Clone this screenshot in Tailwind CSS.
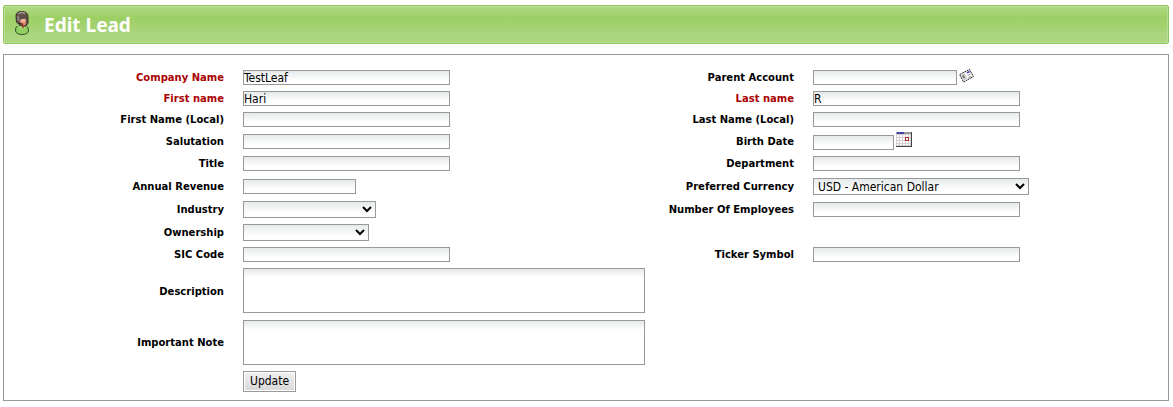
<!DOCTYPE html>
<html lang="en">
<head>
<meta charset="utf-8">
<title>Edit Lead</title>
<script src="https://cdn.jsdelivr.net/npm/@tailwindcss/browser@4"></script>
</head>
<body class="bg-white px-[3px] pt-[5px] pr-1 font-['DejaVu_Sans_Condensed','DejaVu_Sans',sans-serif] text-[12px] leading-[13px] text-black">
<header class="rounded-xs border border-[#8dc858] bg-[#a9d47c]">
  <div class="flex h-[37px] items-center gap-3 border border-[#b9de97] bg-linear-to-b from-[#b0d984] from-0% via-[#9ccf63] via-32% to-[#abd57e] to-80% pl-2">
    <svg class="mb-1 h-[26px] w-[18px]" viewBox="0 0 18 26" aria-hidden="true">
      <path d="M3 17.500Q4 15.500 6 15.500H12Q15.500 16 15.500 20Q15.500 24.500 9 24.500Q2.500 24.500 2.500 20Z" fill="#92cf61" stroke="#35502a"/>
      <path d="M4 16Q5 15 6 15.500L8 19L12 16L14 17" fill="none" stroke="#b5de90"/>
      <path d="M3 6Q3 1.500 8.500 1.500Q15 1.500 15 7V13L13 16H10L6 14.500L3.500 12Z" fill="#5e504a" stroke="#3a2c28"/>
      <path d="M8 9H13V14L11 16L7 14L6.500 11Z" fill="#d8886c"/>
      <path d="M9 9H12V12H8Z" fill="#f1b9a3"/>
      <path d="M5 4Q8 1.500 12 3.500" stroke="#a59b95" stroke-width="1.500" fill="none"/>
      <path d="M5 6L5.500 11" stroke="#8f857f" stroke-width="2" fill="none"/>
      <path d="M6 13L10 14.500" stroke="#201817" fill="none"/>
      <path d="M8 15H12L10 18.500Z" fill="#a33a2d"/>
    </svg>
    <h1 class="pl-px font-['Noto_Sans',sans-serif] text-[19px] leading-6 font-bold text-white">Edit Lead</h1>
  </div>
</header>

<form class="mt-[10px] grid grid-cols-[220fr_402fr_130fr_355fr] items-center gap-x-[19px] gap-y-[6px] border border-[#999] pt-[15px] pb-2 [&_label]:text-right [&_label]:font-['DejaVu_Sans',sans-serif] [&_label]:text-[10px] [&_label]:font-bold [&_label]:whitespace-nowrap [&_input]:block [&_input]:h-[15px] [&_input]:border [&_input]:border-[#999] [&_input]:bg-linear-to-b [&_input]:from-[#e6eaeb] [&_input]:to-white [&_input]:to-75% [&_select]:block [&_select]:h-[17px] [&_select]:border [&_select]:border-[#999] [&_select]:bg-linear-to-b [&_select]:from-[#e6eaeb] [&_select]:to-white [&_select]:to-75% [&_textarea]:block [&_textarea]:h-[45px] [&_textarea]:w-full [&_textarea]:resize-none [&_textarea]:border [&_textarea]:border-[#999] [&_textarea]:bg-linear-to-b [&_textarea]:from-[#e6eaeb] [&_textarea]:to-white [&_textarea]:to-[9px] [&_label]:leading-[15px]">
  <label for="company" class="text-[#a00]">Company Name</label>
  <input id="company" type="text" value="TestLeaf" class="w-[207px]">
  <label for="parent">Parent Account</label>
  <div class="flex items-center gap-[2px]">
    <input id="parent" type="text" class="w-36">
    <button type="button" aria-label="Look up parent account" class="-mt-2 -mb-1">
      <svg class="size-4" viewBox="0 0 16 16" aria-hidden="true">
        <path d="M.7 6.500L10.500 1.500L14.500 8.500L4.500 14Z" fill="#fff" stroke="#222" stroke-dasharray="2 .6"/>
        <path d="M2 7L5.500 5.200L8.500 10.500L5 12.500Z" fill="#ccc"/>
        <path d="M3 8L4.500 7L6 9.500L4.500 10.500Z" fill="#777"/>
        <path d="M8 4.800L10.500 3.500" stroke="#3333bb" stroke-width="1.500"/>
        <path d="M8.500 7.500L11.500 6M9.500 9.500L12.500 8" stroke="#999"/>
      </svg>
    </button>
  </div>

  <label for="first" class="text-[#a00]">First name</label>
  <input id="first" type="text" value="Hari" class="w-[207px]">
  <label for="last" class="text-[#a00]">Last name</label>
  <input id="last" type="text" value="R" class="w-[207px]">

  <label for="first-local">First Name (Local)</label>
  <input id="first-local" type="text" class="w-[207px]">
  <label for="last-local">Last Name (Local)</label>
  <input id="last-local" type="text" class="w-[207px]">

  <label for="salutation">Salutation</label>
  <input id="salutation" type="text" class="w-[207px]">
  <label for="birth">Birth Date</label>
  <div class="flex h-[17px] items-end gap-[2px]">
    <input id="birth" type="text" class="w-[81px]">
    <button type="button" aria-label="Choose birth date" class="mb-[3px] -mt-1">
      <svg class="h-[15px] w-4" viewBox="0 0 16 15" aria-hidden="true" shape-rendering="crispEdges">
        <path d="M0 0h16v15h-16z" fill="#d4d0d0"/>
        <path d="M1 3h2v2h-2zM4 3h2v2h-2zM7 3h2v2h-2zM10 3h2v2h-2zM13 3h1v2h-1zM1 6h2v2h-2zM4 6h2v2h-2zM7 6h2v2h-2zM13 6h1v2h-1zM1 9h2v2h-2zM4 9h2v2h-2zM7 9h2v2h-2zM10 9h2v2h-2zM13 9h1v2h-1zM1 12h2v1h-2zM4 12h2v1h-2zM7 12h2v1h-2zM10 12h2v1h-2zM13 12h1v1h-1z" fill="#fff"/>
        <path d="M0 0h15v2h-15z" fill="#999"/>
        <path d="M1 0h7v2h-7z" fill="#44a"/>
        <path d="M15 0h1v15h-16v-1h15z" fill="#444"/>
        <path d="M9.500 5.500h3v3h-3z" fill="#fff" stroke="#a33"/>
      </svg>
    </button>
  </div>

  <label for="title">Title</label>
  <input id="title" type="text" class="w-[207px]">
  <label for="department">Department</label>
  <input id="department" type="text" class="w-[207px]">

  <label for="revenue">Annual Revenue</label>
  <div class="flex h-[18px] items-center"><input id="revenue" type="text" class="w-[113px]"></div>
  <label for="currency">Preferred Currency</label>
  <div class="flex h-[18px] items-end">
    <select id="currency" class="w-[216px]"><option>USD - American Dollar</option></select>
  </div>

  <label for="industry">Industry</label>
  <select id="industry" class="w-[133px]"><option></option></select>
  <label for="employees">Number Of Employees</label>
  <input id="employees" type="text" class="w-[207px]">

  <label for="ownership">Ownership</label>
  <select id="ownership" class="col-span-3 w-[126px]"><option></option></select>

  <label for="sic">SIC Code</label>
  <input id="sic" type="text" class="w-[207px]">
  <label for="ticker">Ticker Symbol</label>
  <input id="ticker" type="text" class="w-[207px]">

  <label for="description">Description</label>
  <div class="pb-px"><textarea id="description"></textarea></div>

  <label for="note" class="col-start-1">Important Note</label>
  <textarea id="note"></textarea>

  <button type="submit" class="col-start-2 h-[21px] justify-self-start border border-[#999] bg-linear-to-b from-[#f0f0f0] to-[#d8d8d8] px-[6px] shadow-[inset_0_0_0_1px_#fff]">Update</button>
</form>
</body>
</html>
